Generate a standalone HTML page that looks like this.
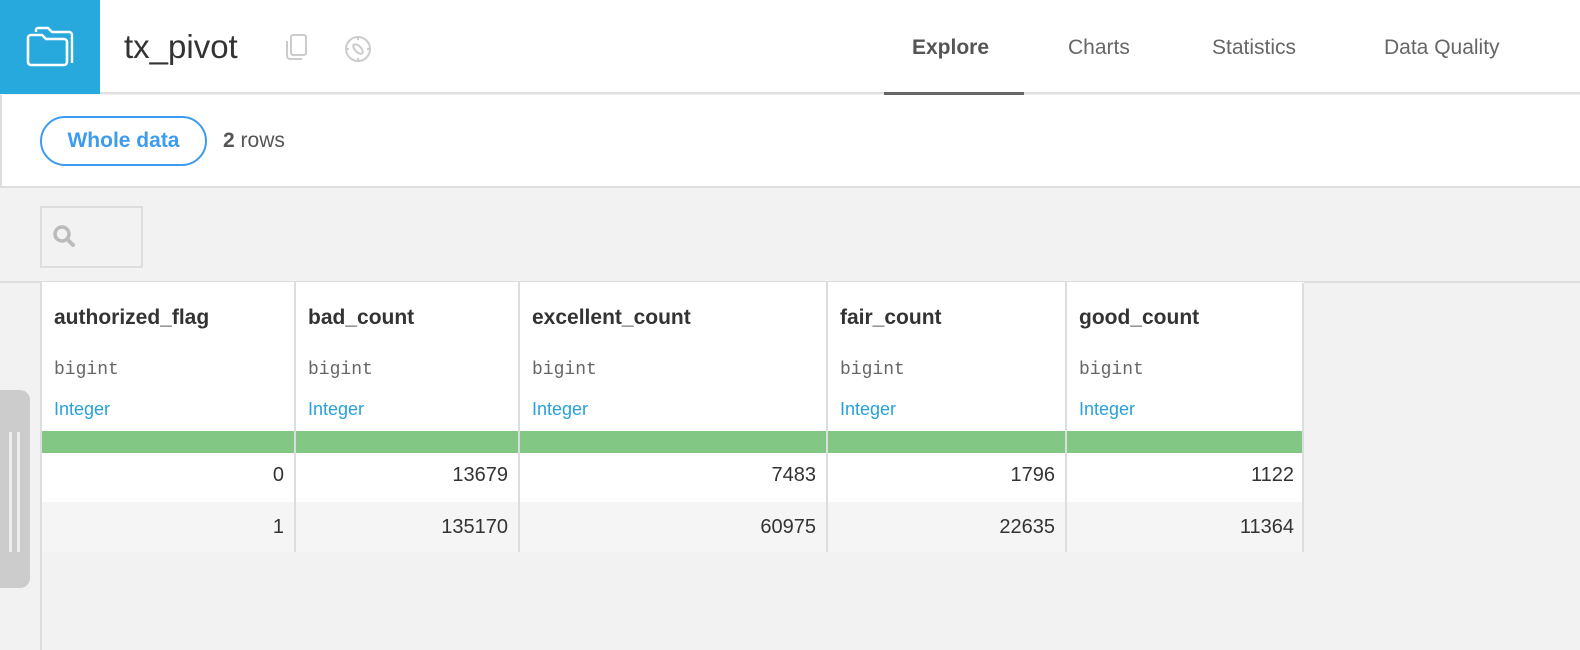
<!DOCTYPE html>
<html><head><meta charset="utf-8"><style>
*{margin:0;padding:0;box-sizing:border-box}
body{width:1580px;height:650px;overflow:hidden;background:#f2f2f2;font-family:"Liberation Sans",sans-serif;position:relative}
.a{position:absolute}
.top{left:0;top:0;width:1580px;height:94px;background:#fff;border-bottom:2px solid #e0e0e0}
.logo{left:0;top:0;width:100px;height:94px;background:#28a9dd}
.sub{left:0;top:95px;width:1580px;height:93px;background:#fff;border-bottom:2px solid #dedede;border-left:2px solid #ddd}
.tab{top:36px;font-size:21px;color:#666}
.col{top:282px;height:270px;border-right:2px solid #ddd;background:#fff}
.h{font-weight:bold;font-size:21px;color:#333;position:absolute;left:12px;top:24px}
.t{font-family:"Liberation Mono",monospace;font-size:18px;color:#666;position:absolute;left:12px;top:78px}
.m{font-size:18px;color:#28a0dc;position:absolute;left:12px;top:117px}
.g{position:absolute;left:0;right:0;top:149px;height:22px;background:#82c784}
.r0{position:absolute;left:0;right:0;top:171px;height:49px;background:#fff;text-align:right;font-size:20px;color:#333;padding:11px 10px 0 0}
.r1{position:absolute;left:0;right:0;top:220px;height:50px;background:#f5f5f5;text-align:right;font-size:20px;color:#333;padding:14px 10px 0 0}
</style></head><body>
<div class="a top"></div>
<div class="a logo"><svg width="100" height="94" viewBox="0 0 100 94"><path d="M36 32 v-2 a2 2 0 0 1 2 -2 h10 l4 4 h17 a3 3 0 0 1 3 3 v28" fill="none" stroke="#fff" stroke-width="2.4"/><path d="M28 38 a3 3 0 0 1 3 -3 h11 l4 4 h18 a3 3 0 0 1 3 3 v20 a3 3 0 0 1 -3 3 h-33 a3 3 0 0 1 -3 -3 z" fill="none" stroke="#fff" stroke-width="2.6"/></svg></div>
<div class="a" style="left:124px;top:28px;font-size:33px;color:#333">tx_pivot</div>
<svg class="a" style="left:284px;top:33px" width="28" height="32"><rect x="7" y="2" width="15" height="20" rx="2" fill="none" stroke="#ccc" stroke-width="2"/><path d="M3 8 v15 a3 3 0 0 0 3 3 h12" fill="none" stroke="#ccc" stroke-width="2"/></svg>
<svg class="a" style="left:343px;top:34px" width="30" height="30"><circle cx="15" cy="15" r="12" fill="none" stroke="#ccc" stroke-width="2"/><ellipse cx="15" cy="15" rx="6" ry="3" transform="rotate(45 15 15)" fill="none" stroke="#ccc" stroke-width="2"/><path d="M15 3v3M15 24v3M3 15h3M24 15h3" stroke="#ccc" stroke-width="2"/></svg>
<div class="a tab" style="left:912px;font-weight:bold;color:#555">Explore</div>
<div class="a" style="left:884px;top:92px;width:140px;height:4px;background:#666"></div>
<div class="a tab" style="left:1068px">Charts</div>
<div class="a tab" style="left:1212px">Statistics</div>
<div class="a tab" style="left:1384px">Data Quality</div>
<div class="a sub"></div>
<div class="a" style="left:40px;top:116px;width:167px;height:50px;border:2px solid #3d9bf0;border-radius:25px;color:#3d9bf0;font-weight:bold;font-size:21px;text-align:center;line-height:46px">Whole data</div>
<div class="a" style="left:223px;top:129px;font-size:21px;color:#555"><b>2</b> rows</div>
<div class="a" style="left:40px;top:206px;width:103px;height:62px;border:2px solid #ddd"></div>
<svg class="a" style="left:52px;top:224px" width="26" height="26"><circle cx="10" cy="10" r="7" fill="none" stroke="#bbb" stroke-width="3.5"/><path d="M15 15l6 6" stroke="#bbb" stroke-width="4" stroke-linecap="round"/></svg>
<div class="a" style="left:0;top:281px;width:1580px;height:2px;background:#ddd"></div>
<div class="a" style="left:40px;top:281px;width:2px;height:369px;background:#ddd"></div>
<div class="a col" style="left:42px;width:254px"><div class="h">authorized_flag</div><div class="t">bigint</div><div class="m">Integer</div><div class="g"></div><div class="r0">0</div><div class="r1">1</div></div>
<div class="a col" style="left:296px;width:224px"><div class="h">bad_count</div><div class="t">bigint</div><div class="m">Integer</div><div class="g"></div><div class="r0">13679</div><div class="r1">135170</div></div>
<div class="a col" style="left:520px;width:308px"><div class="h">excellent_count</div><div class="t">bigint</div><div class="m">Integer</div><div class="g"></div><div class="r0">7483</div><div class="r1">60975</div></div>
<div class="a col" style="left:828px;width:239px"><div class="h">fair_count</div><div class="t">bigint</div><div class="m">Integer</div><div class="g"></div><div class="r0">1796</div><div class="r1">22635</div></div>
<div class="a col" style="left:1067px;width:237px;border-right:none"><div class="h">good_count</div><div class="t">bigint</div><div class="m">Integer</div><div class="g"></div><div class="r0">1122</div><div class="r1">11364</div></div>
<div class="a" style="left:1302px;top:283px;width:2px;height:269px;background:#ddd"></div>
<div class="a" style="left:0;top:390px;width:30px;height:198px;background:#ccc;border-radius:0 10px 10px 0"></div>
<div class="a" style="left:9px;top:432px;width:3px;height:120px;background:#eee"></div>
<div class="a" style="left:17px;top:432px;width:3px;height:120px;background:#eee"></div>
</body></html>
